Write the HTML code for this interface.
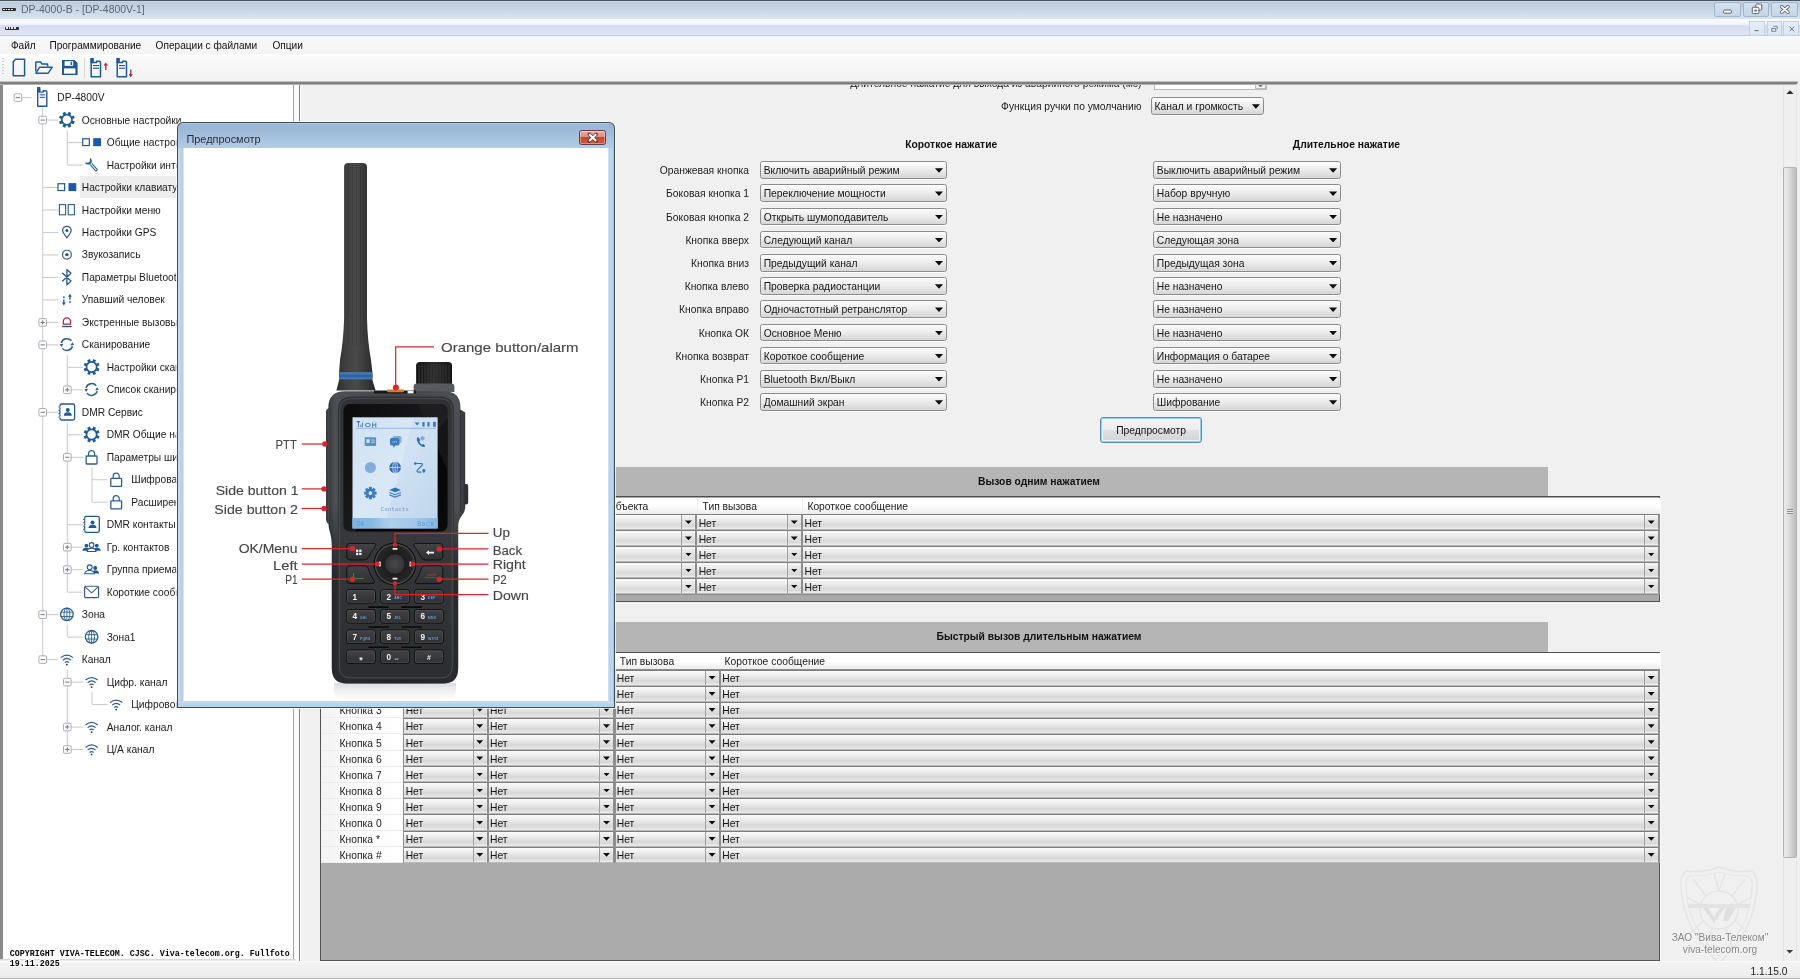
<!DOCTYPE html><html lang="ru"><head><meta charset="utf-8"><title>DP-4000-B</title><style>

*{box-sizing:border-box;margin:0;padding:0}
html,body{width:1800px;height:979px;overflow:hidden;background:#f0f0f0}
#root{position:absolute;left:0;top:0;width:1800px;height:979px;overflow:hidden;will-change:transform;background:#f0f0f0}
body{font-family:"Liberation Sans",sans-serif;font-size:10.3px;color:#1c1c1c;position:relative}
.a{position:absolute}
.t{position:absolute;white-space:nowrap;line-height:12px;height:12px}
.b{font-weight:700}
#titlebar{left:0;top:0;width:1800px;height:19px;background:linear-gradient(#d3dde8 0,#bdccdc 1.2px,#c4d2e1 35%,#d9e4ef 100%);border-top:1px solid #4b5563}
#mdibar{left:0;top:19px;width:1800px;height:17px;background:linear-gradient(#fbfcff 0,#f4f6fc 28%,#eceef9 35%,#d7dbef 42%,#dbdff3 75%,#e2e5f6 100%);border-bottom:1px solid #c5c9d6}
#menubar{left:0;top:36px;width:1800px;height:18px;background:linear-gradient(#f8f8f8,#f4f4f4)}
#toolbar{left:0;top:54px;width:1800px;height:27px;background:linear-gradient(#fefefe 0,#f8f8f8 25%,#f3f3f3 100%)}
#tbshadow{left:0;top:81px;width:1798px;height:4.4px;background:linear-gradient(#f1f1f1 0,#9a9a9a 22%,#767676 48%,#7c7c7c 68%,#b5b5b5 88%,#efefef 100%);border-radius:0 0 4px 0}
.wbtn{position:absolute;top:2px;height:14.5px;background:linear-gradient(#d3e0ee,#c5d6e8);border:1px solid #a3b6cb;border-radius:2px}
.mbtn{position:absolute;top:20.5px;height:15px;background:linear-gradient(#e6eff9,#d8e6f4);border:1px solid #c2d1e2}
#status{left:0;top:961px;width:1800px;height:18px;background:linear-gradient(#f4f4f4,#ececec);border-top:1px solid #fafafa;border-bottom:1.5px solid #b4b4b4}


.cb{position:absolute;height:17.6px;border:1px solid #8c8c8c;border-radius:2.5px;background:linear-gradient(#fcfcfc 0,#ededed 45%,#d6d6d6 100%);box-shadow:0 1px 0 #fdfdfd}
.cb .t{left:2.6px;top:3.05px;color:#161616}
.ar{position:absolute;width:8.2px;height:4.5px;background:#0e0e0e;clip-path:polygon(0 0,100% 0,50% 100%)}
.gc{position:absolute;height:16.1px;border:1px solid #8f8f8f;border-top-color:#7c7c7c;border-bottom-color:#b9b9b9;background:linear-gradient(#ffffff 0,#f7f7f7 8%,#ececec 35%,#d9d9d9 68%,#dcdcdc 80%,#ebebeb 100%)}
.gc i{position:absolute;right:0;top:0;bottom:0;width:14.2px;border-left:1px solid #a0a0a0;background:linear-gradient(#f6f6f6 0,#e4e4e4 40%,#d8d8d8 82%,#f2f2f2 100%)}
.gc .ar{right:3.5px;top:5.4px;width:6.9px;height:3.7px}
.gc .t{left:1.3px;top:2.6px;color:#161616}
.band{position:absolute;background:#b5b5b5}

</style></head><body><div id="root">
<div class="a" style="left:300.4px;top:85px;width:1497px;height:876px;background:#f0f0f0"></div>
<div class="a" style="left:300px;top:71.2px;width:1481px;height:30px;overflow:hidden;clip-path:inset(13.4px 0 0 0)"><div class="t" style="right:639.6px;top:6.6px;color:#1c1c1c">Длительное нажатие для выхода из аварийного режима (мс)</div><div class="a" style="left:853.5px;top:1px;width:113.5px;height:17.6px;border:1px solid #b8b8b8;background:#fff"></div><div class="a" style="left:955px;top:10.4px;width:11px;height:7.4px;border:1px solid #bdbdbd;background:#f0f0f0"></div><div class="ar" style="left:957.8px;top:13.2px;background:#777;width:5.4px;height:3px"></div></div>
<div class="t" style="right:658.5999999999999px;top:100.5px">Функция ручки по умолчанию</div>
<div class="cb" style="left:1151px;top:97.2px;width:112.6px"><div class="t">Канал и громкость</div><div class="ar" style="right:2.6px;top:6.1px"></div></div>
<div class="t b" style="left:905.2px;top:138.9px;color:#111">Короткое нажатие</div>
<div class="t b" style="left:1292.8px;top:138.9px;color:#111">Длительное нажатие</div>
<div class="t" style="right:1051px;top:165.1px">Оранжевая кнопка</div>
<div class="cb" style="left:760.1px;top:161.2px;width:186.6px"><div class="t">Включить аварийный режим</div><div class="ar" style="right:2.6px;top:6.1px"></div></div>
<div class="cb" style="left:1153.2px;top:161.2px;width:187.6px"><div class="t">Выключить аварийный режим</div><div class="ar" style="right:2.6px;top:6.1px"></div></div>
<div class="t" style="right:1051px;top:188.3px">Боковая кнопка 1</div>
<div class="cb" style="left:760.1px;top:184.4px;width:186.6px"><div class="t">Переключение мощности</div><div class="ar" style="right:2.6px;top:6.1px"></div></div>
<div class="cb" style="left:1153.2px;top:184.4px;width:187.6px"><div class="t">Набор вручную</div><div class="ar" style="right:2.6px;top:6.1px"></div></div>
<div class="t" style="right:1051px;top:211.5px">Боковая кнопка 2</div>
<div class="cb" style="left:760.1px;top:207.6px;width:186.6px"><div class="t">Открыть шумоподавитель</div><div class="ar" style="right:2.6px;top:6.1px"></div></div>
<div class="cb" style="left:1153.2px;top:207.6px;width:187.6px"><div class="t">Не назначено</div><div class="ar" style="right:2.6px;top:6.1px"></div></div>
<div class="t" style="right:1051px;top:234.7px">Кнопка вверх</div>
<div class="cb" style="left:760.1px;top:230.8px;width:186.6px"><div class="t">Следующий канал</div><div class="ar" style="right:2.6px;top:6.1px"></div></div>
<div class="cb" style="left:1153.2px;top:230.8px;width:187.6px"><div class="t">Следующая зона</div><div class="ar" style="right:2.6px;top:6.1px"></div></div>
<div class="t" style="right:1051px;top:257.9px">Кнопка вниз</div>
<div class="cb" style="left:760.1px;top:254.0px;width:186.6px"><div class="t">Предыдущий канал</div><div class="ar" style="right:2.6px;top:6.1px"></div></div>
<div class="cb" style="left:1153.2px;top:254.0px;width:187.6px"><div class="t">Предыдущая зона</div><div class="ar" style="right:2.6px;top:6.1px"></div></div>
<div class="t" style="right:1051px;top:281.1px">Кнопка влево</div>
<div class="cb" style="left:760.1px;top:277.2px;width:186.6px"><div class="t">Проверка радиостанции</div><div class="ar" style="right:2.6px;top:6.1px"></div></div>
<div class="cb" style="left:1153.2px;top:277.2px;width:187.6px"><div class="t">Не назначено</div><div class="ar" style="right:2.6px;top:6.1px"></div></div>
<div class="t" style="right:1051px;top:304.3px">Кнопка вправо</div>
<div class="cb" style="left:760.1px;top:300.4px;width:186.6px"><div class="t">Одночастотный ретранслятор</div><div class="ar" style="right:2.6px;top:6.1px"></div></div>
<div class="cb" style="left:1153.2px;top:300.4px;width:187.6px"><div class="t">Не назначено</div><div class="ar" style="right:2.6px;top:6.1px"></div></div>
<div class="t" style="right:1051px;top:327.5px">Кнопка ОК</div>
<div class="cb" style="left:760.1px;top:323.6px;width:186.6px"><div class="t">Основное Меню</div><div class="ar" style="right:2.6px;top:6.1px"></div></div>
<div class="cb" style="left:1153.2px;top:323.6px;width:187.6px"><div class="t">Не назначено</div><div class="ar" style="right:2.6px;top:6.1px"></div></div>
<div class="t" style="right:1051px;top:350.7px">Кнопка возврат</div>
<div class="cb" style="left:760.1px;top:346.8px;width:186.6px"><div class="t">Короткое сообщение</div><div class="ar" style="right:2.6px;top:6.1px"></div></div>
<div class="cb" style="left:1153.2px;top:346.8px;width:187.6px"><div class="t">Информация о батарее</div><div class="ar" style="right:2.6px;top:6.1px"></div></div>
<div class="t" style="right:1051px;top:373.9px">Кнопка P1</div>
<div class="cb" style="left:760.1px;top:370.0px;width:186.6px"><div class="t">Bluetooth Вкл/Выкл</div><div class="ar" style="right:2.6px;top:6.1px"></div></div>
<div class="cb" style="left:1153.2px;top:370.0px;width:187.6px"><div class="t">Не назначено</div><div class="ar" style="right:2.6px;top:6.1px"></div></div>
<div class="t" style="right:1051px;top:397.1px">Кнопка P2</div>
<div class="cb" style="left:760.1px;top:393.2px;width:186.6px"><div class="t">Домашний экран</div><div class="ar" style="right:2.6px;top:6.1px"></div></div>
<div class="cb" style="left:1153.2px;top:393.2px;width:187.6px"><div class="t">Шифрование</div><div class="ar" style="right:2.6px;top:6.1px"></div></div>
<div class="a" style="left:1100px;top:417px;width:102.4px;height:26px;border:1px solid #4f93c4;border-radius:3px;background:linear-gradient(#f5f5f5 0,#ededed 48%,#dfdfdf 52%,#d4d4d4 100%);box-shadow:inset 0 0 0 1px #8fd0f2, inset 0 0 0 2px #eaf5fb"></div>
<div class="t" style="left:1100px;width:102.2px;text-align:center;top:424.5px;color:#111">Предпросмотр</div>
<div class="band" style="left:320px;top:467.2px;width:1227.8px;height:29.6px"></div>
<div class="t b" style="left:839px;width:400px;text-align:center;top:476.3px;color:#111">Вызов одним нажатием</div>
<div class="a" style="left:319.6px;top:496.3px;width:1340.5px;height:105.6px;background:#a9a9a9;border:1px solid #545454;border-top:1.4px solid #4c4c4c;box-shadow:1px 0 0 #fafafa"></div>
<div class="a" style="left:320.8px;top:497.6px;width:1338.8px;height:16.4px;background:linear-gradient(#ffffff 0,#fdfdfd 55%,#ececec 100%)"></div>
<div class="t" style="left:596.8px;top:501.2px;color:#1a1a1a">ID объекта</div>
<div class="t" style="left:702.6px;top:501.2px;color:#1a1a1a">Тип вызова</div>
<div class="t" style="left:807.4px;top:501.2px;color:#1a1a1a">Короткое сообщение</div>
<div class="a" style="left:696.6px;top:498px;width:1px;height:15.6px;background:#ececec"></div>
<div class="a" style="left:802px;top:498px;width:1px;height:15.6px;background:#ececec"></div>
<div class="a" style="left:320.8px;top:513.8px;width:1338.8px;height:81px;background:#8d8d8d"></div>
<div class="gc" style="left:560px;top:514.0px;width:136.4px"><div class="t">Нет</div><i></i><div class="ar"></div></div>
<div class="gc" style="left:696.4px;top:514.0px;width:105.8px"><div class="t">Нет</div><i></i><div class="ar"></div></div>
<div class="gc" style="left:802.2px;top:514.0px;width:857px"><div class="t">Нет</div><i></i><div class="ar"></div></div>
<div class="gc" style="left:560px;top:530.06px;width:136.4px"><div class="t">Нет</div><i></i><div class="ar"></div></div>
<div class="gc" style="left:696.4px;top:530.06px;width:105.8px"><div class="t">Нет</div><i></i><div class="ar"></div></div>
<div class="gc" style="left:802.2px;top:530.06px;width:857px"><div class="t">Нет</div><i></i><div class="ar"></div></div>
<div class="gc" style="left:560px;top:546.12px;width:136.4px"><div class="t">Нет</div><i></i><div class="ar"></div></div>
<div class="gc" style="left:696.4px;top:546.12px;width:105.8px"><div class="t">Нет</div><i></i><div class="ar"></div></div>
<div class="gc" style="left:802.2px;top:546.12px;width:857px"><div class="t">Нет</div><i></i><div class="ar"></div></div>
<div class="gc" style="left:560px;top:562.18px;width:136.4px"><div class="t">Нет</div><i></i><div class="ar"></div></div>
<div class="gc" style="left:696.4px;top:562.18px;width:105.8px"><div class="t">Нет</div><i></i><div class="ar"></div></div>
<div class="gc" style="left:802.2px;top:562.18px;width:857px"><div class="t">Нет</div><i></i><div class="ar"></div></div>
<div class="gc" style="left:560px;top:578.24px;width:136.4px"><div class="t">Нет</div><i></i><div class="ar"></div></div>
<div class="gc" style="left:696.4px;top:578.24px;width:105.8px"><div class="t">Нет</div><i></i><div class="ar"></div></div>
<div class="gc" style="left:802.2px;top:578.24px;width:857px"><div class="t">Нет</div><i></i><div class="ar"></div></div>
<div class="band" style="left:320px;top:622.2px;width:1227.8px;height:29.4px"></div>
<div class="t b" style="left:839px;width:400px;text-align:center;top:631px;color:#111">Быстрый вызов длительным нажатием</div>
<div class="a" style="left:319.6px;top:651.6px;width:1340.5px;height:309.8px;background:#ababab;border:1px solid #545454;border-top:1.4px solid #4c4c4c;box-shadow:1px 0 0 #fafafa"></div>
<div class="a" style="left:320.8px;top:653px;width:1338.8px;height:16.4px;background:linear-gradient(#ffffff 0,#fdfdfd 55%,#ececec 100%)"></div>
<div class="t" style="left:408px;top:655.8px;color:#1a1a1a">Функция</div>
<div class="t" style="left:492px;top:655.8px;color:#1a1a1a">Объект</div>
<div class="t" style="left:619.8px;top:655.8px;color:#1a1a1a">Тип вызова</div>
<div class="t" style="left:724.6px;top:655.8px;color:#1a1a1a">Короткое сообщение</div>
<div class="a" style="left:320.8px;top:669.4px;width:82.6px;height:193.6px;background:linear-gradient(90deg,#f3f3f3 0,#fbfbfb 40%,#ffffff 100%)"></div>
<div class="a" style="left:403.4px;top:669.2px;width:1256.2px;height:194px;background:#8d8d8d"></div>
<div class="a" style="left:320.8px;top:685.1px;width:82.6px;height:1px;background:#ececec"></div>
<div class="t" style="left:339.6px;top:673.1px;color:#1a1a1a">Кнопка 1</div>
<div class="gc" style="left:403.4px;top:669.5px;width:84.3px"><div class="t">Нет</div><i></i><div class="ar"></div></div>
<div class="gc" style="left:487.7px;top:669.5px;width:126.8px"><div class="t">Нет</div><i></i><div class="ar"></div></div>
<div class="gc" style="left:614.5px;top:669.5px;width:105.5px"><div class="t">Нет</div><i></i><div class="ar"></div></div>
<div class="gc" style="left:720px;top:669.5px;width:939.2px"><div class="t">Нет</div><i></i><div class="ar"></div></div>
<div class="a" style="left:320.8px;top:701.21px;width:82.6px;height:1px;background:#ececec"></div>
<div class="t" style="left:339.6px;top:689.21px;color:#1a1a1a">Кнопка 2</div>
<div class="gc" style="left:403.4px;top:685.61px;width:84.3px"><div class="t">Нет</div><i></i><div class="ar"></div></div>
<div class="gc" style="left:487.7px;top:685.61px;width:126.8px"><div class="t">Нет</div><i></i><div class="ar"></div></div>
<div class="gc" style="left:614.5px;top:685.61px;width:105.5px"><div class="t">Нет</div><i></i><div class="ar"></div></div>
<div class="gc" style="left:720px;top:685.61px;width:939.2px"><div class="t">Нет</div><i></i><div class="ar"></div></div>
<div class="a" style="left:320.8px;top:717.32px;width:82.6px;height:1px;background:#ececec"></div>
<div class="t" style="left:339.6px;top:705.32px;color:#1a1a1a">Кнопка 3</div>
<div class="gc" style="left:403.4px;top:701.72px;width:84.3px"><div class="t">Нет</div><i></i><div class="ar"></div></div>
<div class="gc" style="left:487.7px;top:701.72px;width:126.8px"><div class="t">Нет</div><i></i><div class="ar"></div></div>
<div class="gc" style="left:614.5px;top:701.72px;width:105.5px"><div class="t">Нет</div><i></i><div class="ar"></div></div>
<div class="gc" style="left:720px;top:701.72px;width:939.2px"><div class="t">Нет</div><i></i><div class="ar"></div></div>
<div class="a" style="left:320.8px;top:733.43px;width:82.6px;height:1px;background:#ececec"></div>
<div class="t" style="left:339.6px;top:721.43px;color:#1a1a1a">Кнопка 4</div>
<div class="gc" style="left:403.4px;top:717.83px;width:84.3px"><div class="t">Нет</div><i></i><div class="ar"></div></div>
<div class="gc" style="left:487.7px;top:717.83px;width:126.8px"><div class="t">Нет</div><i></i><div class="ar"></div></div>
<div class="gc" style="left:614.5px;top:717.83px;width:105.5px"><div class="t">Нет</div><i></i><div class="ar"></div></div>
<div class="gc" style="left:720px;top:717.83px;width:939.2px"><div class="t">Нет</div><i></i><div class="ar"></div></div>
<div class="a" style="left:320.8px;top:749.54px;width:82.6px;height:1px;background:#ececec"></div>
<div class="t" style="left:339.6px;top:737.54px;color:#1a1a1a">Кнопка 5</div>
<div class="gc" style="left:403.4px;top:733.94px;width:84.3px"><div class="t">Нет</div><i></i><div class="ar"></div></div>
<div class="gc" style="left:487.7px;top:733.94px;width:126.8px"><div class="t">Нет</div><i></i><div class="ar"></div></div>
<div class="gc" style="left:614.5px;top:733.94px;width:105.5px"><div class="t">Нет</div><i></i><div class="ar"></div></div>
<div class="gc" style="left:720px;top:733.94px;width:939.2px"><div class="t">Нет</div><i></i><div class="ar"></div></div>
<div class="a" style="left:320.8px;top:765.65px;width:82.6px;height:1px;background:#ececec"></div>
<div class="t" style="left:339.6px;top:753.65px;color:#1a1a1a">Кнопка 6</div>
<div class="gc" style="left:403.4px;top:750.05px;width:84.3px"><div class="t">Нет</div><i></i><div class="ar"></div></div>
<div class="gc" style="left:487.7px;top:750.05px;width:126.8px"><div class="t">Нет</div><i></i><div class="ar"></div></div>
<div class="gc" style="left:614.5px;top:750.05px;width:105.5px"><div class="t">Нет</div><i></i><div class="ar"></div></div>
<div class="gc" style="left:720px;top:750.05px;width:939.2px"><div class="t">Нет</div><i></i><div class="ar"></div></div>
<div class="a" style="left:320.8px;top:781.76px;width:82.6px;height:1px;background:#ececec"></div>
<div class="t" style="left:339.6px;top:769.76px;color:#1a1a1a">Кнопка 7</div>
<div class="gc" style="left:403.4px;top:766.16px;width:84.3px"><div class="t">Нет</div><i></i><div class="ar"></div></div>
<div class="gc" style="left:487.7px;top:766.16px;width:126.8px"><div class="t">Нет</div><i></i><div class="ar"></div></div>
<div class="gc" style="left:614.5px;top:766.16px;width:105.5px"><div class="t">Нет</div><i></i><div class="ar"></div></div>
<div class="gc" style="left:720px;top:766.16px;width:939.2px"><div class="t">Нет</div><i></i><div class="ar"></div></div>
<div class="a" style="left:320.8px;top:797.87px;width:82.6px;height:1px;background:#ececec"></div>
<div class="t" style="left:339.6px;top:785.87px;color:#1a1a1a">Кнопка 8</div>
<div class="gc" style="left:403.4px;top:782.27px;width:84.3px"><div class="t">Нет</div><i></i><div class="ar"></div></div>
<div class="gc" style="left:487.7px;top:782.27px;width:126.8px"><div class="t">Нет</div><i></i><div class="ar"></div></div>
<div class="gc" style="left:614.5px;top:782.27px;width:105.5px"><div class="t">Нет</div><i></i><div class="ar"></div></div>
<div class="gc" style="left:720px;top:782.27px;width:939.2px"><div class="t">Нет</div><i></i><div class="ar"></div></div>
<div class="a" style="left:320.8px;top:813.98px;width:82.6px;height:1px;background:#ececec"></div>
<div class="t" style="left:339.6px;top:801.98px;color:#1a1a1a">Кнопка 9</div>
<div class="gc" style="left:403.4px;top:798.38px;width:84.3px"><div class="t">Нет</div><i></i><div class="ar"></div></div>
<div class="gc" style="left:487.7px;top:798.38px;width:126.8px"><div class="t">Нет</div><i></i><div class="ar"></div></div>
<div class="gc" style="left:614.5px;top:798.38px;width:105.5px"><div class="t">Нет</div><i></i><div class="ar"></div></div>
<div class="gc" style="left:720px;top:798.38px;width:939.2px"><div class="t">Нет</div><i></i><div class="ar"></div></div>
<div class="a" style="left:320.8px;top:830.09px;width:82.6px;height:1px;background:#ececec"></div>
<div class="t" style="left:339.6px;top:818.09px;color:#1a1a1a">Кнопка 0</div>
<div class="gc" style="left:403.4px;top:814.49px;width:84.3px"><div class="t">Нет</div><i></i><div class="ar"></div></div>
<div class="gc" style="left:487.7px;top:814.49px;width:126.8px"><div class="t">Нет</div><i></i><div class="ar"></div></div>
<div class="gc" style="left:614.5px;top:814.49px;width:105.5px"><div class="t">Нет</div><i></i><div class="ar"></div></div>
<div class="gc" style="left:720px;top:814.49px;width:939.2px"><div class="t">Нет</div><i></i><div class="ar"></div></div>
<div class="a" style="left:320.8px;top:846.2px;width:82.6px;height:1px;background:#ececec"></div>
<div class="t" style="left:339.6px;top:834.2px;color:#1a1a1a">Кнопка *</div>
<div class="gc" style="left:403.4px;top:830.6px;width:84.3px"><div class="t">Нет</div><i></i><div class="ar"></div></div>
<div class="gc" style="left:487.7px;top:830.6px;width:126.8px"><div class="t">Нет</div><i></i><div class="ar"></div></div>
<div class="gc" style="left:614.5px;top:830.6px;width:105.5px"><div class="t">Нет</div><i></i><div class="ar"></div></div>
<div class="gc" style="left:720px;top:830.6px;width:939.2px"><div class="t">Нет</div><i></i><div class="ar"></div></div>
<div class="a" style="left:320.8px;top:862.31px;width:82.6px;height:1px;background:#ececec"></div>
<div class="t" style="left:339.6px;top:850.31px;color:#1a1a1a">Кнопка #</div>
<div class="gc" style="left:403.4px;top:846.71px;width:84.3px"><div class="t">Нет</div><i></i><div class="ar"></div></div>
<div class="gc" style="left:487.7px;top:846.71px;width:126.8px"><div class="t">Нет</div><i></i><div class="ar"></div></div>
<div class="gc" style="left:614.5px;top:846.71px;width:105.5px"><div class="t">Нет</div><i></i><div class="ar"></div></div>
<div class="gc" style="left:720px;top:846.71px;width:939.2px"><div class="t">Нет</div><i></i><div class="ar"></div></div>
<div class="a" style="left:1783.2px;top:85px;width:13.8px;height:876px;background:#efefef;border-left:1px solid #e3e3e3;border-right:1px solid #e6e6e6"></div>
<div class="a" style="left:1783.4px;top:166.6px;width:13.4px;height:691.2px;border:1px solid #b3b3b3;border-radius:1.5px;background:linear-gradient(90deg,#ececec 0,#dedede 40%,#c3c3c3 85%,#bdbdbd 100%)"></div>
<div class="a" style="left:1786.6px;top:508.6px;width:6.4px;height:5.4px;background:repeating-linear-gradient(#8f8f8f 0 0.9px,#e8e8e8 0.9px 2.1px)"></div>
<div class="ar" style="left:1786.4px;top:90.2px;width:7.2px;height:3.8px;background:#2c2c2c;clip-path:polygon(50% 0,100% 100%,0 100%)"></div>
<div class="ar" style="left:1786.4px;top:950px;width:6.8px;height:3.6px;background:#3c3c3c"></div>
<svg class="a" style="left:1676px;top:863px" width="86" height="104" viewBox="0 0 86 104"><g fill="none" stroke="#e5e5e5" stroke-width="1.5"><path d="M43 4 Q28 10 10 8 Q4 14 5 22 Q6 66 43 100 Q80 66 81 22 Q82 14 76 8 Q58 10 43 4 Z"/><path d="M43 9 Q29 14 13 13 Q9 17 10 24 Q11 63 43 93 Q75 63 76 24 Q77 17 73 13 Q57 14 43 9 Z" stroke-width="1"/><circle cx="43" cy="47" r="19"/><path d="M43 28 L38 11 M43 28 L49 11 M30 33 L17 16 M56 33 L69 16 M25 42 L10 34 M61 42 L76 34 M27 58 L14 70 M59 58 L72 70 M36 65 L30 84 M50 65 L56 84"/></g><path d="M12 41 H74 V45 H12 Z" fill="#e3e3e3"/><path d="M27 45 L38 60 L49 45 H44 L38 54 L32 45 Z M50 45 H60 L52 58 H47 Z" fill="#e0e0e0"/></svg>
<div class="t" style="left:1620px;width:200px;text-align:center;top:932.1px;font-size:10.1px;color:#868686;text-shadow:0.6px 0.6px 0 #fbfbfb">ЗАО "Вива-Телеком"</div>
<div class="t" style="left:1620px;width:200px;text-align:center;top:944.2px;font-size:10.15px;color:#868686;text-shadow:0.6px 0.6px 0 #fbfbfb">viva-telecom.org</div>
<div class="a" style="left:0;top:84.5px;width:296px;height:876.5px;background:#8a8a8a"></div>
<div class="a" style="left:3.2px;top:85.3px;width:290.3px;height:874px;background:#fff"></div>
<div class="a" style="left:293px;top:84.6px;width:8.6px;height:876.4px;background:linear-gradient(90deg,#a4a4a4 0,#a4a4a4 1.2px,#fbfbfb 1.5px,#fbfbfb 5.8px,#7e7e7e 6.1px,#7e7e7e 7.2px,#fcfcfc 7.5px,#fcfcfc 8.3px,#f0f0f0 8.6px)"></div>
<div class="a" style="left:0;top:959.4px;width:296px;height:1.6px;background:linear-gradient(#d0d0d0,#f4f4f4)"></div>
<div class="a" style="left:80.2px;top:176.32px;width:100px;height:21.6px;background:#ededed"></div>
<svg class="a" style="left:0;top:0" width="296" height="979" viewBox="0 0 296 979"><path d="M42.7 107.8 V659.3" stroke="#c9c9c9" stroke-width="1"/><path d="M67.3 130.28 V164.74" stroke="#c9c9c9" stroke-width="1"/><path d="M67.3 355.08 V389.54" stroke="#c9c9c9" stroke-width="1"/><path d="M67.3 422.52000000000004 V591.86" stroke="#c9c9c9" stroke-width="1"/><path d="M92.0 467.48 V501.94" stroke="#c9c9c9" stroke-width="1"/><path d="M67.3 624.8399999999999 V636.8199999999999" stroke="#c9c9c9" stroke-width="1"/><path d="M67.3 669.8 V749.2199999999999" stroke="#c9c9c9" stroke-width="1"/><path d="M92.0 692.28 V704.26" stroke="#c9c9c9" stroke-width="1"/><path d="M21.9 97.6 H31.700000000000003" stroke="#c9c9c9" stroke-width="1"/><rect x="14.099999999999998" y="93.8" width="7.6" height="7.6" rx="1.2" fill="#fdfdfd" stroke="#a9adb6" stroke-width="1"/><path d="M15.799999999999999 97.6 h4.2" stroke="#6f7480" stroke-width="1"/><g transform="translate(42.2,97.3)"><g transform="translate(-5.4,-10)"><path d="M0.9 0.4 V19 H10 V4.4 Q10 3.4 9 3.4 H6.4 V4.8 H3 V0.4 Z" fill="#fff" stroke="#1f5a96" stroke-width="1.4" stroke-linejoin="round"/><rect x="0.2" y="0" width="2.9" height="5.2" fill="#1f5a96"/><rect x="2.9" y="7" width="5.4" height="1.1" fill="#1f5a96"/><rect x="2.9" y="9.5" width="5.4" height="1.2" fill="#46698f"/></g></g><path d="M42.7 120.08 H58.400000000000006" stroke="#c9c9c9" stroke-width="1"/><rect x="38.900000000000006" y="116.28" width="7.6" height="7.6" rx="1.2" fill="#fdfdfd" stroke="#a9adb6" stroke-width="1"/><path d="M40.6 120.08 h4.2" stroke="#6f7480" stroke-width="1"/><g transform="translate(66.9,119.78)"><circle r="5.1" fill="none" stroke="#1f5a96" stroke-width="1.7"/><rect x="-1.45" y="-8" width="2.9" height="2.7" fill="#1f5a96" transform="rotate(22.5)"/><rect x="-1.45" y="-8" width="2.9" height="2.7" fill="#1f5a96" transform="rotate(67.5)"/><rect x="-1.45" y="-8" width="2.9" height="2.7" fill="#1f5a96" transform="rotate(112.5)"/><rect x="-1.45" y="-8" width="2.9" height="2.7" fill="#1f5a96" transform="rotate(157.5)"/><rect x="-1.45" y="-8" width="2.9" height="2.7" fill="#1f5a96" transform="rotate(202.5)"/><rect x="-1.45" y="-8" width="2.9" height="2.7" fill="#1f5a96" transform="rotate(247.5)"/><rect x="-1.45" y="-8" width="2.9" height="2.7" fill="#1f5a96" transform="rotate(292.5)"/><rect x="-1.45" y="-8" width="2.9" height="2.7" fill="#1f5a96" transform="rotate(337.5)"/></g><path d="M67.3 142.56 H83.1" stroke="#c9c9c9" stroke-width="1"/><g transform="translate(91.6,142.26)"><rect x="-8.9" y="-3.5" width="6.6" height="6.8" fill="#fff" stroke="#1f5a96" stroke-width="1.2"/><rect x="1.6" y="-4.1" width="7.8" height="8" fill="#1a59a8"/></g><path d="M67.3 165.04000000000002 H83.1" stroke="#c9c9c9" stroke-width="1"/><g transform="translate(91.6,164.74)"><g transform="rotate(-42)"><path d="M-1.05 -1 V7.2 Q0 8.3 1.05 7.2 V-1" fill="#fff" stroke="#2d5d8f" stroke-width="1.1"/><path d="M-3.4 -6.2 A3.6 3.6 0 1 0 3.4 -6.2 L1.2 -3.6 H-1.2 Z" fill="#1f5a96"/></g></g><path d="M42.7 187.52 H58.400000000000006" stroke="#c9c9c9" stroke-width="1"/><g transform="translate(66.9,187.22)"><rect x="-8.9" y="-3.5" width="6.6" height="6.8" fill="#fff" stroke="#1f5a96" stroke-width="1.2"/><rect x="1.6" y="-4.1" width="7.8" height="8" fill="#1a59a8"/></g><path d="M42.7 210.0 H58.400000000000006" stroke="#c9c9c9" stroke-width="1"/><g transform="translate(66.9,209.7)"><rect x="-7.5" y="-5.1" width="6.2" height="10.2" fill="none" stroke="#2d5d8f" stroke-width="1.1"/><rect x="1.3" y="-5.1" width="6.2" height="10.2" fill="none" stroke="#2d5d8f" stroke-width="1.1"/></g><path d="M42.7 232.48000000000002 H58.400000000000006" stroke="#c9c9c9" stroke-width="1"/><g transform="translate(66.9,232.18)"><path d="M0 5.6 C-2.2 2.6 -4.3 0.6 -4.3 -1.6 A4.3 4.3 0 0 1 4.3 -1.6 C4.3 0.6 2.2 2.6 0 5.6 Z" fill="#fff" stroke="#2d5d8f" stroke-width="1.2"/><circle cy="-1.6" r="1.5" fill="#1f5a96"/></g><path d="M42.7 254.96000000000004 H58.400000000000006" stroke="#c9c9c9" stroke-width="1"/><g transform="translate(66.9,254.66000000000003)"><circle r="4.4" fill="none" stroke="#2d5d8f" stroke-width="1.2"/><circle r="1.7" fill="#1f5a96"/></g><path d="M42.7 277.44 H58.400000000000006" stroke="#c9c9c9" stroke-width="1"/><g transform="translate(66.9,277.14)"><path d="M-4.3 -3.9 L4.1 3.9 L0 7.6 V-7.6 L4.1 -3.9 L-4.3 3.9" fill="none" stroke="#1f5a96" stroke-width="1.3" stroke-linejoin="round" stroke-linecap="round"/></g><path d="M42.7 299.92 H58.400000000000006" stroke="#c9c9c9" stroke-width="1"/><g transform="translate(66.9,299.62)"><rect x="-3.8" y="-3.2" width="1.5" height="1.7" fill="#1f5a96"/><path d="M-3.05 0 V4.2" stroke="#1f5a96" stroke-width="1.3"/><path d="M-5 3 L-3.05 6 L-1.1 3 Z" fill="#1f5a96"/><rect x="2.3" y="1.6" width="1.5" height="1.7" fill="#1f5a96"/><path d="M3.05 0.2 V-4" stroke="#1f5a96" stroke-width="1.3"/><path d="M1.1 -2.8 L3.05 -5.8 L5 -2.8 Z" fill="#1f5a96"/></g><path d="M42.7 322.40000000000003 H58.400000000000006" stroke="#c9c9c9" stroke-width="1"/><rect x="38.900000000000006" y="318.6" width="7.6" height="7.6" rx="1.2" fill="#fdfdfd" stroke="#a9adb6" stroke-width="1"/><path d="M40.6 322.40000000000003 h4.2" stroke="#6f7480" stroke-width="1"/><path d="M42.7 320.3 v4.2" stroke="#6f7480" stroke-width="1"/><g transform="translate(66.9,322.1)"><path d="M-3.6 2.1 V-0.6 A3.6 3.6 0 0 1 3.6 -0.6 V2.1 Z" fill="#fff" stroke="#a3293a" stroke-width="1.2" stroke-linejoin="round"/><path d="M-4.9 4.4 H4.9" stroke="#1f5a96" stroke-width="1.4"/></g><path d="M42.7 344.88 H58.400000000000006" stroke="#c9c9c9" stroke-width="1"/><rect x="38.900000000000006" y="341.08" width="7.6" height="7.6" rx="1.2" fill="#fdfdfd" stroke="#a9adb6" stroke-width="1"/><path d="M40.6 344.88 h4.2" stroke="#6f7480" stroke-width="1"/><g transform="translate(66.9,344.58)"><path d="M-5.6 -1.6 A5.9 5.9 0 0 1 4.6 -3.8" fill="none" stroke="#2d5d8f" stroke-width="1.5"/><path d="M5.6 1.6 A5.9 5.9 0 0 1 -4.6 3.8" fill="none" stroke="#2d5d8f" stroke-width="1.5"/><path d="M-7.3 -0.3 L-5.4 2.4 L-3.5 -0.9 Z" fill="#2d5d8f"/><path d="M7.3 0.3 L5.4 -2.4 L3.5 0.9 Z" fill="#2d5d8f"/></g><path d="M67.3 367.36 H83.1" stroke="#c9c9c9" stroke-width="1"/><g transform="translate(91.6,367.06)"><circle r="5.1" fill="none" stroke="#1f5a96" stroke-width="1.7"/><rect x="-1.45" y="-8" width="2.9" height="2.7" fill="#1f5a96" transform="rotate(22.5)"/><rect x="-1.45" y="-8" width="2.9" height="2.7" fill="#1f5a96" transform="rotate(67.5)"/><rect x="-1.45" y="-8" width="2.9" height="2.7" fill="#1f5a96" transform="rotate(112.5)"/><rect x="-1.45" y="-8" width="2.9" height="2.7" fill="#1f5a96" transform="rotate(157.5)"/><rect x="-1.45" y="-8" width="2.9" height="2.7" fill="#1f5a96" transform="rotate(202.5)"/><rect x="-1.45" y="-8" width="2.9" height="2.7" fill="#1f5a96" transform="rotate(247.5)"/><rect x="-1.45" y="-8" width="2.9" height="2.7" fill="#1f5a96" transform="rotate(292.5)"/><rect x="-1.45" y="-8" width="2.9" height="2.7" fill="#1f5a96" transform="rotate(337.5)"/></g><path d="M67.3 389.84000000000003 H83.1" stroke="#c9c9c9" stroke-width="1"/><rect x="63.5" y="386.04" width="7.6" height="7.6" rx="1.2" fill="#fdfdfd" stroke="#a9adb6" stroke-width="1"/><path d="M65.2 389.84000000000003 h4.2" stroke="#6f7480" stroke-width="1"/><path d="M67.3 387.74 v4.2" stroke="#6f7480" stroke-width="1"/><g transform="translate(91.6,389.54)"><path d="M-5.6 -1.6 A5.9 5.9 0 0 1 4.6 -3.8" fill="none" stroke="#2d5d8f" stroke-width="1.5"/><path d="M5.6 1.6 A5.9 5.9 0 0 1 -4.6 3.8" fill="none" stroke="#2d5d8f" stroke-width="1.5"/><path d="M-7.3 -0.3 L-5.4 2.4 L-3.5 -0.9 Z" fill="#2d5d8f"/><path d="M7.3 0.3 L5.4 -2.4 L3.5 0.9 Z" fill="#2d5d8f"/></g><path d="M42.7 412.32000000000005 H58.400000000000006" stroke="#c9c9c9" stroke-width="1"/><rect x="38.900000000000006" y="408.52000000000004" width="7.6" height="7.6" rx="1.2" fill="#fdfdfd" stroke="#a9adb6" stroke-width="1"/><path d="M40.6 412.32000000000005 h4.2" stroke="#6f7480" stroke-width="1"/><g transform="translate(66.9,412.02000000000004)"><rect x="-6.9" y="-8" width="14.6" height="16" rx="1.7" fill="#fff" stroke="#1f5a96" stroke-width="1.3"/><path d="M-7.7 -5 h1.6 M-7.7 -1.7 h1.6 M-7.7 1.7 h1.6 M-7.7 5 h1.6" stroke="#fff" stroke-width="1.5"/><path d="M-8.4 -5 h1.7 M-8.4 -1.7 h1.7 M-8.4 1.7 h1.7 M-8.4 5 h1.7" stroke="#1f5a96" stroke-width="1.2"/><circle cx="0.9" cy="-1.9" r="2" fill="#1f5a96"/><path d="M-3.1 3.7 Q-3.1 0.3 0.9 0.3 Q4.9 0.3 4.9 3.7 Z" fill="#1f5a96"/></g><path d="M67.3 434.8 H83.1" stroke="#c9c9c9" stroke-width="1"/><g transform="translate(91.6,434.5)"><circle r="5.1" fill="none" stroke="#1f5a96" stroke-width="1.7"/><rect x="-1.45" y="-8" width="2.9" height="2.7" fill="#1f5a96" transform="rotate(22.5)"/><rect x="-1.45" y="-8" width="2.9" height="2.7" fill="#1f5a96" transform="rotate(67.5)"/><rect x="-1.45" y="-8" width="2.9" height="2.7" fill="#1f5a96" transform="rotate(112.5)"/><rect x="-1.45" y="-8" width="2.9" height="2.7" fill="#1f5a96" transform="rotate(157.5)"/><rect x="-1.45" y="-8" width="2.9" height="2.7" fill="#1f5a96" transform="rotate(202.5)"/><rect x="-1.45" y="-8" width="2.9" height="2.7" fill="#1f5a96" transform="rotate(247.5)"/><rect x="-1.45" y="-8" width="2.9" height="2.7" fill="#1f5a96" transform="rotate(292.5)"/><rect x="-1.45" y="-8" width="2.9" height="2.7" fill="#1f5a96" transform="rotate(337.5)"/></g><path d="M67.3 457.28000000000003 H83.1" stroke="#c9c9c9" stroke-width="1"/><rect x="63.5" y="453.48" width="7.6" height="7.6" rx="1.2" fill="#fdfdfd" stroke="#a9adb6" stroke-width="1"/><path d="M65.2 457.28000000000003 h4.2" stroke="#6f7480" stroke-width="1"/><g transform="translate(91.6,456.98)"><path d="M-3 -1 V-3.4 A3 3 0 0 1 3 -3.4 V-1" fill="none" stroke="#2d5d8f" stroke-width="1.2"/><rect x="-5.4" y="-1" width="10.8" height="8" rx="0.7" fill="#fff" stroke="#2d5d8f" stroke-width="1.3"/></g><path d="M92.0 479.76000000000005 H107.7" stroke="#c9c9c9" stroke-width="1"/><g transform="translate(116.2,479.46000000000004)"><path d="M-3 -1 V-3.4 A3 3 0 0 1 3 -3.4 V-1" fill="none" stroke="#2d5d8f" stroke-width="1.2"/><rect x="-5.4" y="-1" width="10.8" height="8" rx="0.7" fill="#fff" stroke="#2d5d8f" stroke-width="1.3"/></g><path d="M92.0 502.24 H107.7" stroke="#c9c9c9" stroke-width="1"/><g transform="translate(116.2,501.94)"><path d="M-3 -1 V-3.4 A3 3 0 0 1 3 -3.4 V-1" fill="none" stroke="#2d5d8f" stroke-width="1.2"/><rect x="-5.4" y="-1" width="10.8" height="8" rx="0.7" fill="#fff" stroke="#2d5d8f" stroke-width="1.3"/></g><path d="M67.3 524.7199999999999 H83.1" stroke="#c9c9c9" stroke-width="1"/><g transform="translate(91.6,524.42)"><rect x="-6.9" y="-8" width="14.6" height="16" rx="1.7" fill="#fff" stroke="#1f5a96" stroke-width="1.3"/><path d="M-7.7 -5 h1.6 M-7.7 -1.7 h1.6 M-7.7 1.7 h1.6 M-7.7 5 h1.6" stroke="#fff" stroke-width="1.5"/><path d="M-8.4 -5 h1.7 M-8.4 -1.7 h1.7 M-8.4 1.7 h1.7 M-8.4 5 h1.7" stroke="#1f5a96" stroke-width="1.2"/><circle cx="0.9" cy="-1.9" r="2" fill="#1f5a96"/><path d="M-3.1 3.7 Q-3.1 0.3 0.9 0.3 Q4.9 0.3 4.9 3.7 Z" fill="#1f5a96"/></g><path d="M67.3 547.1999999999999 H83.1" stroke="#c9c9c9" stroke-width="1"/><rect x="63.5" y="543.4" width="7.6" height="7.6" rx="1.2" fill="#fdfdfd" stroke="#a9adb6" stroke-width="1"/><path d="M65.2 547.1999999999999 h4.2" stroke="#6f7480" stroke-width="1"/><path d="M67.3 545.1 v4.2" stroke="#6f7480" stroke-width="1"/><g transform="translate(91.6,546.9)"><circle cx="-5.2" cy="-1.2" r="1.9" fill="#1f5a96"/><path d="M-9.3 3.8 Q-9 0.9 -5.2 0.9 Q-3.4 0.9 -2.6 1.9 L-3.4 3.8 Z" fill="#1f5a96"/><circle cx="5.2" cy="-1.2" r="1.9" fill="#1f5a96"/><path d="M9.3 3.8 Q9 0.9 5.2 0.9 Q3.4 0.9 2.6 1.9 L3.4 3.8 Z" fill="#1f5a96"/><circle cx="0" cy="-2" r="2.3" fill="#fff" stroke="#1f5a96" stroke-width="1.1"/><path d="M-4.4 4.6 Q-4.2 1.2 0 1.2 Q4.2 1.2 4.4 4.6 Z" fill="#fff" stroke="#1f5a96" stroke-width="1.1"/></g><path d="M67.3 569.68 H83.1" stroke="#c9c9c9" stroke-width="1"/><rect x="63.5" y="565.88" width="7.6" height="7.6" rx="1.2" fill="#fdfdfd" stroke="#a9adb6" stroke-width="1"/><path d="M65.2 569.68 h4.2" stroke="#6f7480" stroke-width="1"/><path d="M67.3 567.58 v4.2" stroke="#6f7480" stroke-width="1"/><g transform="translate(91.6,569.38)"><circle cx="3.6" cy="-1.4" r="2" fill="#1f5a96"/><path d="M0.6 4 Q1 0.8 3.6 0.8 Q7.2 0.8 7.5 4 Z" fill="#1f5a96"/><circle cx="-1.9" cy="-2.1" r="2.4" fill="#fff" stroke="#1f5a96" stroke-width="1.1"/><path d="M-6.9 4.4 Q-6.6 1.1 -1.9 1.1 Q2.3 1.1 2.8 4.4 Z" fill="#fff" stroke="#1f5a96" stroke-width="1.1"/></g><path d="M67.3 592.16 H83.1" stroke="#c9c9c9" stroke-width="1"/><g transform="translate(91.6,591.86)"><rect x="-7" y="-5.6" width="14" height="11.4" rx="1.2" fill="#fff" stroke="#2d5d8f" stroke-width="1.2"/><path d="M-6.6 -5 L0 1 L6.6 -5" fill="none" stroke="#2d5d8f" stroke-width="1.1"/></g><path d="M42.7 614.6399999999999 H58.400000000000006" stroke="#c9c9c9" stroke-width="1"/><rect x="38.900000000000006" y="610.8399999999999" width="7.6" height="7.6" rx="1.2" fill="#fdfdfd" stroke="#a9adb6" stroke-width="1"/><path d="M40.6 614.6399999999999 h4.2" stroke="#6f7480" stroke-width="1"/><g transform="translate(66.9,614.3399999999999)"><circle r="6.3" fill="#fff" stroke="#2d5d8f" stroke-width="1.3"/><ellipse rx="2.9" ry="6.3" fill="none" stroke="#2d5d8f" stroke-width="0.9"/><path d="M0 -6.3 V6.3 M-5.9 -2.2 H5.9 M-5.9 2.2 H5.9" stroke="#2d5d8f" stroke-width="0.9"/></g><path d="M67.3 637.1199999999999 H83.1" stroke="#c9c9c9" stroke-width="1"/><g transform="translate(91.6,636.8199999999999)"><circle r="6.3" fill="#fff" stroke="#2d5d8f" stroke-width="1.3"/><ellipse rx="2.9" ry="6.3" fill="none" stroke="#2d5d8f" stroke-width="0.9"/><path d="M0 -6.3 V6.3 M-5.9 -2.2 H5.9 M-5.9 2.2 H5.9" stroke="#2d5d8f" stroke-width="0.9"/></g><path d="M42.7 659.5999999999999 H58.400000000000006" stroke="#c9c9c9" stroke-width="1"/><rect x="38.900000000000006" y="655.8" width="7.6" height="7.6" rx="1.2" fill="#fdfdfd" stroke="#a9adb6" stroke-width="1"/><path d="M40.6 659.5999999999999 h4.2" stroke="#6f7480" stroke-width="1"/><g transform="translate(66.9,659.3)"><path d="M-6.1 -1.7 Q0 -6.8 6.1 -1.7" fill="none" stroke="#2d5d8f" stroke-width="1.2"/><path d="M-4 0.9 Q0 -2.6 4 0.9" fill="none" stroke="#2d5d8f" stroke-width="1.2"/><path d="M-2 3.3 Q0 1.5 2 3.3" fill="none" stroke="#2d5d8f" stroke-width="1.2"/><circle cy="5.3" r="0.85" fill="#222"/></g><path d="M67.3 682.0799999999999 H83.1" stroke="#c9c9c9" stroke-width="1"/><rect x="63.5" y="678.28" width="7.6" height="7.6" rx="1.2" fill="#fdfdfd" stroke="#a9adb6" stroke-width="1"/><path d="M65.2 682.0799999999999 h4.2" stroke="#6f7480" stroke-width="1"/><g transform="translate(91.6,681.78)"><path d="M-6.1 -1.7 Q0 -6.8 6.1 -1.7" fill="none" stroke="#2d5d8f" stroke-width="1.2"/><path d="M-4 0.9 Q0 -2.6 4 0.9" fill="none" stroke="#2d5d8f" stroke-width="1.2"/><path d="M-2 3.3 Q0 1.5 2 3.3" fill="none" stroke="#2d5d8f" stroke-width="1.2"/><circle cy="5.3" r="0.85" fill="#222"/></g><path d="M92.0 704.56 H107.7" stroke="#c9c9c9" stroke-width="1"/><g transform="translate(116.2,704.26)"><path d="M-6.1 -1.7 Q0 -6.8 6.1 -1.7" fill="none" stroke="#2d5d8f" stroke-width="1.2"/><path d="M-4 0.9 Q0 -2.6 4 0.9" fill="none" stroke="#2d5d8f" stroke-width="1.2"/><path d="M-2 3.3 Q0 1.5 2 3.3" fill="none" stroke="#2d5d8f" stroke-width="1.2"/><circle cy="5.3" r="0.85" fill="#222"/></g><path d="M67.3 727.04 H83.1" stroke="#c9c9c9" stroke-width="1"/><rect x="63.5" y="723.24" width="7.6" height="7.6" rx="1.2" fill="#fdfdfd" stroke="#a9adb6" stroke-width="1"/><path d="M65.2 727.04 h4.2" stroke="#6f7480" stroke-width="1"/><path d="M67.3 724.94 v4.2" stroke="#6f7480" stroke-width="1"/><g transform="translate(91.6,726.74)"><path d="M-6.1 -1.7 Q0 -6.8 6.1 -1.7" fill="none" stroke="#2d5d8f" stroke-width="1.2"/><path d="M-4 0.9 Q0 -2.6 4 0.9" fill="none" stroke="#2d5d8f" stroke-width="1.2"/><path d="M-2 3.3 Q0 1.5 2 3.3" fill="none" stroke="#2d5d8f" stroke-width="1.2"/><circle cy="5.3" r="0.85" fill="#222"/></g><path d="M67.3 749.5199999999999 H83.1" stroke="#c9c9c9" stroke-width="1"/><rect x="63.5" y="745.7199999999999" width="7.6" height="7.6" rx="1.2" fill="#fdfdfd" stroke="#a9adb6" stroke-width="1"/><path d="M65.2 749.5199999999999 h4.2" stroke="#6f7480" stroke-width="1"/><path d="M67.3 747.42 v4.2" stroke="#6f7480" stroke-width="1"/><g transform="translate(91.6,749.2199999999999)"><path d="M-6.1 -1.7 Q0 -6.8 6.1 -1.7" fill="none" stroke="#2d5d8f" stroke-width="1.2"/><path d="M-4 0.9 Q0 -2.6 4 0.9" fill="none" stroke="#2d5d8f" stroke-width="1.2"/><path d="M-2 3.3 Q0 1.5 2 3.3" fill="none" stroke="#2d5d8f" stroke-width="1.2"/><circle cy="5.3" r="0.85" fill="#222"/></g></svg>
<div class="t" style="left:57.3px;top:92.1px;font-size:10.22px;color:#1b1b1b">DP-4800V</div>
<div class="t" style="left:81.8px;top:114.58px;font-size:10.22px;color:#1b1b1b">Основные настройки</div>
<div class="t" style="left:106.7px;top:137.06px;font-size:10.22px;color:#1b1b1b">Общие настройки</div>
<div class="t" style="left:106.7px;top:159.54px;font-size:10.22px;color:#1b1b1b">Настройки интерфейса</div>
<div class="t" style="left:81.8px;top:182.02px;font-size:10.22px;color:#1b1b1b">Настройки клавиатуры</div>
<div class="t" style="left:81.8px;top:204.5px;font-size:10.22px;color:#1b1b1b">Настройки меню</div>
<div class="t" style="left:81.8px;top:226.98px;font-size:10.22px;color:#1b1b1b">Настройки GPS</div>
<div class="t" style="left:81.8px;top:249.46px;font-size:10.22px;color:#1b1b1b">Звукозапись</div>
<div class="t" style="left:81.8px;top:271.94px;font-size:10.22px;color:#1b1b1b">Параметры Bluetooth</div>
<div class="t" style="left:81.8px;top:294.42px;font-size:10.22px;color:#1b1b1b">Упавший человек</div>
<div class="t" style="left:81.8px;top:316.9px;font-size:10.22px;color:#1b1b1b">Экстренные вызовы</div>
<div class="t" style="left:81.8px;top:339.38px;font-size:10.22px;color:#1b1b1b">Сканирование</div>
<div class="t" style="left:106.7px;top:361.86px;font-size:10.22px;color:#1b1b1b">Настройки сканирования</div>
<div class="t" style="left:106.7px;top:384.34px;font-size:10.22px;color:#1b1b1b">Список сканирования</div>
<div class="t" style="left:81.8px;top:406.82px;font-size:10.22px;color:#1b1b1b">DMR Сервис</div>
<div class="t" style="left:106.7px;top:429.3px;font-size:10.22px;color:#1b1b1b">DMR Общие настройки</div>
<div class="t" style="left:106.7px;top:451.78px;font-size:10.22px;color:#1b1b1b">Параметры шифрования</div>
<div class="t" style="left:131.3px;top:474.26px;font-size:10.22px;color:#1b1b1b">Шифрование</div>
<div class="t" style="left:131.3px;top:496.74px;font-size:10.22px;color:#1b1b1b">Расширенное шифрование</div>
<div class="t" style="left:106.7px;top:519.22px;font-size:10.22px;color:#1b1b1b">DMR контакты</div>
<div class="t" style="left:106.7px;top:541.7px;font-size:10.22px;color:#1b1b1b">Гр. контактов</div>
<div class="t" style="left:106.7px;top:564.18px;font-size:10.22px;color:#1b1b1b">Группа приема</div>
<div class="t" style="left:106.7px;top:586.66px;font-size:10.22px;color:#1b1b1b">Короткие сообщения</div>
<div class="t" style="left:81.8px;top:609.14px;font-size:10.22px;color:#1b1b1b">Зона</div>
<div class="t" style="left:106.7px;top:631.62px;font-size:10.22px;color:#1b1b1b">Зона1</div>
<div class="t" style="left:81.8px;top:654.1px;font-size:10.22px;color:#1b1b1b">Канал</div>
<div class="t" style="left:106.7px;top:676.58px;font-size:10.22px;color:#1b1b1b">Цифр. канал</div>
<div class="t" style="left:131.3px;top:699.06px;font-size:10.22px;color:#1b1b1b">Цифровой канал1</div>
<div class="t" style="left:106.7px;top:721.54px;font-size:10.22px;color:#1b1b1b">Аналог. канал</div>
<div class="t" style="left:106.7px;top:744.02px;font-size:10.22px;color:#1b1b1b">Ц/А канал</div>
<div class="t" style="left:9.8px;top:947.5px;z-index:50;font-family:'Liberation Mono',monospace;font-weight:700;font-size:8.34px;color:#000;text-shadow:-1px 0 #fff,1px 0 #fff,0 -1px #fff,0 1px #fff,-1px -1px #fff,1px 1px #fff,1px -1px #fff,-1px 1px #fff">COPYRIGHT VIVA-TELECOM. CJSC. Viva-telecom.org. Fullfoto</div>
<div class="t" style="left:9.8px;top:957.6px;z-index:50;font-family:'Liberation Mono',monospace;font-weight:700;font-size:8.34px;color:#000;text-shadow:-1px 0 #fff,1px 0 #fff,0 -1px #fff,0 1px #fff,-1px -1px #fff,1px 1px #fff,1px -1px #fff,-1px 1px #fff">19.11.2025</div>
<div id="titlebar" class="a"></div>
<div class="a" style="left:1.5px;top:7.5px;width:14px;height:3.5px;background:#2a2a2a;border-radius:1px"></div>
<div class="a" style="left:3px;top:8.6px;width:11px;height:1.3px;background:repeating-linear-gradient(90deg,#e8e8e8 0 1.6px,#2a2a2a 1.6px 2.7px)"></div>
<div class="t" style="left:21px;top:3.5px;font-size:10.42px;color:#5b6675;letter-spacing:0.02px">DP-4000-B - [DP-4800V-1]</div>
<div class="wbtn" style="left:1714px;width:26.5px"></div>
<div class="wbtn" style="left:1742.6px;width:26.6px"></div>
<div class="wbtn" style="left:1771.4px;width:27px"></div>
<svg class="a" style="left:1714px;top:2px" width="27" height="15" viewBox="0 0 27 15"><rect x="9.5" y="8" width="8" height="3.2" rx="1.2" fill="#fff" stroke="#555f6b" stroke-width="1"/></svg>
<svg class="a" style="left:1742.6px;top:1px" width="27" height="16" viewBox="0 0 27 16"><rect x="12.8" y="3" width="6" height="6.2" rx="1" fill="#fff" stroke="#555f6b" stroke-width="1"/><rect x="9.3" y="6.2" width="6.6" height="6.4" rx="1" fill="#fff" stroke="#555f6b" stroke-width="1"/><rect x="11.3" y="8.6" width="2.6" height="2" fill="#6a7480"/></svg>
<svg class="a" style="left:1771.4px;top:2px" width="27" height="15" viewBox="0 0 27 15"><path d="M10.6 4.6 L17 10.2 M17 4.6 L10.6 10.2" stroke="#555f6b" stroke-width="3.5" stroke-linecap="round"/><path d="M10.6 4.6 L17 10.2 M17 4.6 L10.6 10.2" stroke="#fff" stroke-width="1.9" stroke-linecap="round"/></svg>
<div id="mdibar" class="a"></div>
<div class="a" style="left:4.5px;top:26.5px;width:14px;height:3px;background:#2e2e2e;border-radius:1px"></div>
<div class="a" style="left:6px;top:27.4px;width:11px;height:1.2px;background:repeating-linear-gradient(90deg,#e8e8e8 0 1.6px,#2e2e2e 1.6px 2.7px)"></div>
<div class="mbtn" style="left:1749.3px;width:16px"></div>
<div class="mbtn" style="left:1766.8px;width:15.4px"></div>
<div class="mbtn" style="left:1783.4px;width:15.3px"></div>
<svg class="a" style="left:1749.3px;top:20.5px" width="50" height="15" viewBox="0 0 50 15"><path d="M5.6 9.6 H9.6" stroke="#6b7480" stroke-width="1.1"/><path d="M24.2 5.3 H28.2 V8.3 M22.7 7.5 H26.8 V10.3 H22.7 Z" fill="none" stroke="#7b8592" stroke-width="1"/><path d="M40.6 5.6 L45 10.2 M45 5.6 L40.6 10.2" stroke="#66707d" stroke-width="1"/></svg>
<div id="menubar" class="a"></div>
<div class="t" style="left:10.9px;top:40.1px;font-size:10.1px;color:#111">Файл</div>
<div class="t" style="left:49.4px;top:40.1px;font-size:10.1px;color:#111">Программирование</div>
<div class="t" style="left:155.6px;top:40.1px;font-size:10.1px;color:#111">Операции с файлами</div>
<div class="t" style="left:272.4px;top:40.1px;font-size:10.1px;color:#111">Опции</div>
<div id="toolbar" class="a"></div>
<div id="tbshadow" class="a"></div>
<div class="a" style="left:2px;top:57.5px;width:1.5px;height:18px;background:repeating-linear-gradient(#c9c9c9 0 1.2px,transparent 1.2px 3px)"></div>
<svg class="a" style="left:11px;top:57px" width="17" height="21" viewBox="0 0 17 21"><path d="M4.6 2.3 H13.6 V18.8 H2.3 V4.6 Z" fill="none" stroke="#1d5b97" stroke-width="1.5" stroke-linejoin="round"/></svg>
<svg class="a" style="left:34px;top:59px" width="21" height="17" viewBox="0 0 21 17"><path d="M1.8 12.6 V3 H6.6 L8 5 H13.6 V7.6" fill="none" stroke="#1d5b97" stroke-width="1.4" stroke-linejoin="round"/><path d="M5.6 8.2 H18.3 L14.2 14.2 H1.9 Z" fill="none" stroke="#1d5b97" stroke-width="1.4" stroke-linejoin="round"/></svg>
<svg class="a" style="left:61px;top:59px" width="18" height="17" viewBox="0 0 18 17"><path d="M1 1 H13.6 L16.6 4 V16 H1 Z" fill="#1d5b97"/><rect x="3.6" y="2.2" width="8.6" height="4.6" fill="#fff"/><rect x="9.6" y="2.9" width="1.5" height="3.1" fill="#1d5b97"/><rect x="3" y="9.4" width="11.4" height="5.2" fill="#fff"/></svg>
<div class="a" style="left:84px;top:58px;width:1px;height:19.5px;background:#dcd3d3"></div>
<svg class="a" style="left:90.4px;top:57.5px" width="12" height="20" viewBox="0 0 12 20"><path d="M1.2 0.5 V18.8 H10.5 V4.2 Q10.5 3.3 9.4 3.3 H6.6 V4.6 H3.1 V0.5 Z" fill="none" stroke="#1d5b97" stroke-width="1.5" stroke-linejoin="round"/><rect x="0.5" y="0.3" width="2.6" height="5" fill="#1d5b97"/><rect x="3" y="7" width="6" height="1.1" fill="#1d5b97"/><rect x="3" y="9.6" width="6" height="1.3" fill="#4d6f93"/></svg>
<svg class="a" style="left:115.8px;top:57.5px" width="12" height="20" viewBox="0 0 12 20"><path d="M1.2 0.5 V18.8 H10.5 V4.2 Q10.5 3.3 9.4 3.3 H6.6 V4.6 H3.1 V0.5 Z" fill="none" stroke="#1d5b97" stroke-width="1.5" stroke-linejoin="round"/><rect x="0.5" y="0.3" width="2.6" height="5" fill="#1d5b97"/><rect x="3" y="7" width="6" height="1.1" fill="#1d5b97"/><rect x="3" y="9.6" width="6" height="1.3" fill="#4d6f93"/></svg>
<svg class="a" style="left:103px;top:61.5px" width="6" height="9" viewBox="0 0 6 9"><path d="M2.8 8 V2.2" stroke="#b5212b" stroke-width="1.3"/><path d="M0.6 3.4 L2.8 0.4 L5 3.4 Z" fill="#b5212b"/></svg>
<svg class="a" style="left:128.2px;top:69px" width="6" height="9" viewBox="0 0 6 9"><path d="M2.8 0.6 V6.4" stroke="#b5212b" stroke-width="1.3"/><path d="M0.6 5.2 L2.8 8.2 L5 5.2 Z" fill="#b5212b"/></svg>
<div id="status" class="a"></div>
<div class="t" style="left:1750.6px;top:966px;font-size:10.2px;color:#222">1.1.15.0</div>
<div class="a" style="left:175.8px;top:120.9px;width:440.2px;height:588.2px;z-index:20;border-radius:7px 7px 1px 1px;background:rgba(255,255,255,0.75)"></div>
<div class="a" style="left:176.8px;top:121.9px;width:438.2px;height:586.2px;z-index:20;border-radius:6px 6px 0 0;background:#3d4f5c"></div>
<div class="a" style="left:178.05px;top:123.1px;width:435.7px;height:583.7px;z-index:20;border-radius:5px 5px 0 0;background:linear-gradient(#c4d3e2 0,#9cb6d5 1.3px,#9fb9d8 8px,#b1cbe6 23.5px,#b9d0ea 60px,#bcd1ea 100%)"></div>
<div class="a" style="left:178.05px;top:148px;width:6px;height:553.5px;z-index:20;background:linear-gradient(90deg,#d0dcec 0,#bfd2e9 40%,#bccfe2 78%,#e4f3f7 100%)"></div>
<div class="a" style="left:607.7px;top:148px;width:6px;height:553.5px;z-index:20;background:linear-gradient(90deg,#dbe6f1 0,#bfd1e5 22%,#bcd2ec 50%,#b3dff4 85%,#7fa6b8 100%)"></div>
<div class="a" style="left:178.05px;top:701.5px;width:435.7px;height:5.3px;z-index:20;background:linear-gradient(#dbe6f1 0,#bdd0e9 25%,#b8d3ec 60%,#abd9ee 100%)"></div>
<div class="t" style="left:186.4px;top:132.6px;z-index:21;font-size:10.95px;color:#1f2c3c">Предпросмотр</div>
<div class="a" style="left:579.2px;top:130.2px;width:27.2px;height:15.2px;z-index:21;border:1px solid #6b3a3a;border-radius:2.5px;background:linear-gradient(#e7b0a6 0,#d98d80 45%,#c9452f 50%,#cf5a3e 100%);box-shadow:inset 0 0 0 0.8px rgba(255,255,255,0.45)"></div>
<svg class="a" style="left:579.2px;top:130.2px;z-index:22" width="27.2" height="15.2" viewBox="0 0 27.2 15.2"><path d="M10.2 4.2 L17.2 11 M17.2 4.2 L10.2 11" stroke="#5a3a3a" stroke-width="3.4" stroke-linecap="round"/><path d="M10.2 4.2 L17.2 11 M17.2 4.2 L10.2 11" stroke="#fff" stroke-width="2" stroke-linecap="butt"/></svg>
<div class="a" style="left:184px;top:147.6px;width:423.7px;height:553.9px;z-index:21;background:#fff;overflow:hidden"><svg class="a" style="left:0;top:0.4px" width="424" height="553" viewBox="184 148 424 553"><defs>
<linearGradient id="ant" x1="0" x2="1" y1="0" y2="0"><stop offset="0" stop-color="#2c2c2d"/><stop offset="0.22" stop-color="#3e3e3f"/><stop offset="0.5" stop-color="#4a4a4b"/><stop offset="0.8" stop-color="#353536"/><stop offset="1" stop-color="#262627"/></linearGradient>
<linearGradient id="ring" x1="0" x2="0" y1="0" y2="1"><stop offset="0" stop-color="#4a88c8"/><stop offset="0.45" stop-color="#2e64a2"/><stop offset="0.6" stop-color="#2e64a2"/><stop offset="1" stop-color="#4a86c4"/></linearGradient>
<linearGradient id="body" x1="0" x2="1" y1="0" y2="0"><stop offset="0" stop-color="#38393d"/><stop offset="0.05" stop-color="#4d4f54"/><stop offset="0.5" stop-color="#424449"/><stop offset="0.95" stop-color="#4d4f54"/><stop offset="1" stop-color="#333438"/></linearGradient>
<linearGradient id="front" x1="0" x2="0" y1="0" y2="1"><stop offset="0" stop-color="#303134"/><stop offset="0.5" stop-color="#37383b"/><stop offset="1" stop-color="#2c2d30"/></linearGradient>
<linearGradient id="kg" x1="0" x2="0" y1="0" y2="1"><stop offset="0" stop-color="#434345"/><stop offset="1" stop-color="#303032"/></linearGradient>
<linearGradient id="gloss" x1="0" x2="1" y1="0" y2="1"><stop offset="0" stop-color="#0b0b0c"/><stop offset="0.55" stop-color="#1b1b1d"/><stop offset="0.56" stop-color="#050506"/><stop offset="1" stop-color="#0a0a0b"/></linearGradient>
<linearGradient id="lcd" x1="0" x2="1" y1="0" y2="1"><stop offset="0" stop-color="#cfe1f2"/><stop offset="0.5" stop-color="#d9e8f6"/><stop offset="1" stop-color="#c6dbef"/></linearGradient>
<linearGradient id="soft" x1="0" x2="1" y1="0" y2="0"><stop offset="0" stop-color="#7fb5e3"/><stop offset="0.22" stop-color="#86b9e5"/><stop offset="0.45" stop-color="#b4d4ee"/><stop offset="0.7" stop-color="#a9cdec"/><stop offset="1" stop-color="#88bae4"/></linearGradient>
<radialGradient id="dpad" cx="0.5" cy="0.5" r="0.5"><stop offset="0" stop-color="#4a4a4c"/><stop offset="0.45" stop-color="#343436"/><stop offset="0.5" stop-color="#1d1d1e"/><stop offset="0.9" stop-color="#262627"/><stop offset="1" stop-color="#58585a"/></radialGradient>
<radialGradient id="shad" cx="0.5" cy="0.5" r="0.5"><stop offset="0" stop-color="#bdbdbd"/><stop offset="0.6" stop-color="#dedede"/><stop offset="1" stop-color="#ffffff"/></radialGradient>
<linearGradient id="bodyv" gradientUnits="userSpaceOnUse" x1="0" x2="0" y1="505" y2="575"><stop offset="0" stop-color="#000" stop-opacity="0"/><stop offset="1" stop-color="#050506" stop-opacity="0.5"/></linearGradient>
<linearGradient id="refl" x1="0" x2="0" y1="0" y2="1"><stop offset="0" stop-color="#dcdcdc"/><stop offset="0.35" stop-color="#ececec"/><stop offset="1" stop-color="#ffffff"/></linearGradient>
<linearGradient id="knob" x1="0" x2="1" y1="0" y2="0"><stop offset="0" stop-color="#151516"/><stop offset="0.5" stop-color="#2c2c2d"/><stop offset="1" stop-color="#141415"/></linearGradient>
</defs><rect x="184" y="148" width="424" height="553" fill="#fff"/><path d="M334 683 H456 V690 Q456 700 440 700.5 H350 Q334 700 334 690 Z" fill="url(#refl)"/><path d="M344.1 167 Q344.1 163 348.4 163 H362.8 Q367 163 367 167 V318 Q367.4 340 371 360 L372.4 372.3 V380 L375.6 390.5 H336.4 L339.1 380 V372.3 L340 360 Q343.6 340 344.1 318 Z" fill="url(#ant)"/><path d="M348.2 164 V345" stroke="#2a2a2b" stroke-width="0.5" opacity="0.7"/><path d="M352.4 164 V345" stroke="#2a2a2b" stroke-width="0.5" opacity="0.7"/><path d="M356.6 164 V345" stroke="#2a2a2b" stroke-width="0.5" opacity="0.7"/><path d="M360.6 164 V345" stroke="#2a2a2b" stroke-width="0.5" opacity="0.7"/><path d="M364 164 V345" stroke="#2a2a2b" stroke-width="0.5" opacity="0.7"/><rect x="339.1" y="372.3" width="33.3" height="7" fill="url(#ring)"/><path d="M413.6 392 V386.6 Q413.6 383.6 417 383.6 H451.6 Q454.4 383.6 454.4 386.6 V392 Z" fill="#585a5f"/><path d="M416.1 383.8 V365.6 Q416.1 362 420.2 362 H448 Q452 362 452 365.6 V383.8 Z" fill="url(#knob)"/><path d="M419 365 V383" stroke="#3d3d3e" stroke-width="0.8"/><path d="M422 365 V383" stroke="#3d3d3e" stroke-width="0.8"/><path d="M425 365 V383" stroke="#3d3d3e" stroke-width="0.8"/><path d="M428 365 V383" stroke="#3d3d3e" stroke-width="0.8"/><path d="M431 365 V383" stroke="#3d3d3e" stroke-width="0.8"/><path d="M434 365 V383" stroke="#3d3d3e" stroke-width="0.8"/><path d="M437 365 V383" stroke="#3d3d3e" stroke-width="0.8"/><path d="M440 365 V383" stroke="#3d3d3e" stroke-width="0.8"/><path d="M443 365 V383" stroke="#3d3d3e" stroke-width="0.8"/><path d="M446 365 V383" stroke="#3d3d3e" stroke-width="0.8"/><path d="M449 365 V383" stroke="#3d3d3e" stroke-width="0.8"/><path d="M328.3 408 Q328.3 391.2 345 391.2 H444 Q460.4 391.2 460.4 407 V409.4 L465.2 412.4 V507 Q465.2 511.6 462.2 515 Q458.2 520 458.2 526 V668 Q458.2 683.6 443 683.6 H347 Q331.8 683.6 331.8 668 V545 Q331.8 539 330.4 534 Q328.3 528 328.3 521 Z" fill="url(#body)"/><path d="M328.3 408 Q328.3 391.2 345 391.2 H444 Q460.4 391.2 460.4 407 V409.4 L465.2 412.4 V507 Q465.2 511.6 462.2 515 Q458.2 520 458.2 526 V668 Q458.2 683.6 443 683.6 H347 Q331.8 683.6 331.8 668 V545 Q331.8 539 330.4 534 Q328.3 528 328.3 521 Z" fill="url(#bodyv)"/><path d="M328.8 408 Q325.8 409 326 413 V519 Q326.2 523 328.8 524.4 Z" fill="#3a3b3f"/><path d="M326 459 H329 M326 476 H329 M326 499 H329" stroke="#4a4a4c" stroke-width="0.8"/><rect x="463.6" y="484" width="4.6" height="20.4" rx="2" fill="#2e2f33"/><path d="M460.6 410 V512" stroke="#2c2d30" stroke-width="0.9"/><path d="M374 390.4 H416 V393.6 H374 Z" fill="#1a1a1c"/><rect x="387" y="389.6" width="17" height="2.6" rx="1" fill="#d77a28"/><rect x="407.6" y="390.8" width="6" height="2.6" fill="#f4f4f4"/><path d="M337.8 411 Q337.8 396.6 352 396.6 H440 Q454 396.6 454 411 V668 Q454 679.6 442 679.6 H348 Q337.8 679.6 337.8 668 Z" fill="url(#front)"/><path d="M339.6 411 Q339.6 398.6 352 398.6 H440 Q452.2 398.6 452.2 411 V667 Q452.2 677.8 441 677.8 H350 Q339.6 677.8 339.6 667 Z" fill="none" stroke="#505155" stroke-width="0.8"/><rect x="343" y="403.4" width="105" height="128.6" rx="7" fill="url(#gloss)" stroke="#39393c" stroke-width="0.8"/><path d="M418 404 H441 Q447.4 404 447.4 410 V470 Z" fill="#232326" opacity="0.55"/><rect x="352.5" y="417.3" width="85.1" height="111.1" fill="url(#lcd)"/><rect x="352.5" y="518" width="85.1" height="10.4" fill="url(#soft)"/><path d="M356 428.3 H436" stroke="#7aa6d4" stroke-width="0.7"/><path d="M437.6 417.3 H414 L384 528.4 H437.6 Z" fill="#7fa8d4" opacity="0.10"/><g transform="translate(0,1)" fill="#3b78bb" stroke="none"><path d="M356.4 420 h4 l-2 2.6 z"/><rect x="358" y="420" width="0.8" height="6"/><rect x="360.4" y="423.6" width="0.9" height="2.4"/><rect x="362" y="421.6" width="0.9" height="4.4"/><ellipse cx="367.8" cy="424" rx="2.6" ry="1.6" fill="none" stroke="#3b78bb" stroke-width="0.9"/><path d="M372.6 421.6 v5 M375.8 421.6 v5 M372.6 424 h3.2" stroke="#3b78bb" stroke-width="0.9" fill="none"/><path d="M414.6 421.6 h5 l-2.5 3 z"/><rect x="422.4" y="421" width="2.2" height="4.6" rx="0.6"/><rect x="427.4" y="421" width="2.2" height="4.6" rx="0.6"/><rect x="433" y="420.8" width="2.8" height="5" rx="0.6"/></g><rect x="364.7" y="437.3" width="11.4" height="8.8" rx="0.8" fill="#5b90c9"/><rect x="366.4" y="439.3" width="3.2" height="3.6" fill="#cfe1f2"/><path d="M371.2 440.09999999999997 h3.4 M371.2 442.3 h3.4" stroke="#cfe1f2" stroke-width="0.8"/><rect x="392.5" y="436.09999999999997" width="9" height="7" rx="1.6" fill="#86b0dc"/><rect x="389.90000000000003" y="438.09999999999997" width="9.6" height="7.4" rx="1.8" fill="#3f7dc0"/><path d="M393.1 445.09999999999997 l0.4 2.6 l2.2 -2.4 z" fill="#3f7dc0"/><path d="M392.5 441.9 h4.4" stroke="#cfe1f2" stroke-width="0.9" stroke-dasharray="1 0.7"/><path d="M417.9 437.09999999999997 q-1.4 0.6 -1 2.6 q1 5 5.6 7 q2 0.6 2.8 -0.8 l-1.8 -2 l-1.6 0.8 q-2 -1.2 -2.6 -3.4 l1.2 -1.2 z" fill="#2e6db5"/><circle cx="422.5" cy="438.3" r="2.1" fill="#7fa9d8"/><circle cx="370.4" cy="467.5" r="5.6" fill="#86aedb"/><circle cx="370.4" cy="467.5" r="3" fill="none" stroke="#7ba5d4" stroke-width="0.8"/><circle cx="395.1" cy="467.5" r="5.8" fill="#2f6fb6"/><ellipse cx="395.1" cy="467.5" rx="2.4" ry="5.8" fill="none" stroke="#cfe1f2" stroke-width="0.8"/><path d="M389.3 467.5 h11.6 M395.1 461.7 v11.6" stroke="#cfe1f2" stroke-width="0.8"/><path d="M416.3 463.5 h4.6 q2.4 0 1 2 l-4.4 4.6 q-1.4 2 1 2 h3" fill="none" stroke="#2f6fb6" stroke-width="1.1"/><circle cx="415.3" cy="463.5" r="1.3" fill="#2f6fb6"/><path d="M422.3 470.7 l1.6 2.6 l1.6 -2.6 a1.6 1.6 0 1 0 -3.2 0" fill="#2f6fb6"/><g transform="translate(370.4,493.1)" fill="#3b7cc2"><rect x="-1.5" y="-6.2" width="3" height="3" transform="rotate(0)"/><rect x="-1.5" y="-6.2" width="3" height="3" transform="rotate(45)"/><rect x="-1.5" y="-6.2" width="3" height="3" transform="rotate(90)"/><rect x="-1.5" y="-6.2" width="3" height="3" transform="rotate(135)"/><rect x="-1.5" y="-6.2" width="3" height="3" transform="rotate(180)"/><rect x="-1.5" y="-6.2" width="3" height="3" transform="rotate(225)"/><rect x="-1.5" y="-6.2" width="3" height="3" transform="rotate(270)"/><rect x="-1.5" y="-6.2" width="3" height="3" transform="rotate(315)"/><circle r="4.5"/><circle r="1.9" fill="#d3e4f4"/></g><path d="M395.1 487.5 l5.8 2.4 l-5.8 2.4 l-5.8 -2.4 z" fill="#2f6fb6"/><path d="M389.3 492.5 l5.8 2.2 l5.8 -2.2 M389.3 494.90000000000003 l5.8 2.2 l5.8 -2.2" fill="none" stroke="#3f7dc0" stroke-width="1.2"/><text x="395" y="511.4" text-anchor="middle" font-family="Liberation Mono" font-size="5.4" fill="#6f9bc8" letter-spacing="0.3">Contacts</text><text x="356.8" y="526" font-family="Liberation Mono" font-size="6.4" fill="#5f9dd6" letter-spacing="0.2">OK</text><text x="434.6" y="526" text-anchor="end" font-family="Liberation Mono" font-size="6.4" fill="#5f9dd6" letter-spacing="0.5">Back</text><path d="M350 543.4 H373 Q377.4 543.4 375 547 Q371 552 368.6 557 Q367.4 560 364 560 H351 Q346.8 560 346.8 556 V546.6 Q346.8 543.4 350 543.4 Z" fill="url(#kg)" stroke="#0c0c0c" stroke-width="0.9"/><path d="M439.6 543.4 H416.6 Q412.2 543.4 414.6 547 Q418.6 552 421 557 Q422.2 560 425.6 560 H438.6 Q442.8 560 442.8 556 V546.6 Q442.8 543.4 439.6 543.4 Z" fill="url(#kg)" stroke="#0c0c0c" stroke-width="0.9"/><path d="M351 565.8 H365 Q367.6 565.8 368.4 569 Q369.8 575 373.6 580 Q376 583.6 371.6 583.6 H350 Q346.8 583.6 346.8 580.4 V569 Q346.8 565.8 351 565.8 Z" fill="url(#kg)" stroke="#0c0c0c" stroke-width="0.9"/><path d="M438.6 565.8 H424.6 Q422 565.8 421.2 569 Q419.8 575 416 580 Q413.6 583.6 418 583.6 H439.6 Q442.8 583.6 442.8 580.4 V569 Q442.8 565.8 438.6 565.8 Z" fill="url(#kg)" stroke="#0c0c0c" stroke-width="0.9"/><circle cx="394.9" cy="564" r="21.4" fill="#0e0e0f"/><circle cx="394.9" cy="564" r="20.2" fill="url(#dpad)"/><g fill="#f2f2f2"><rect x="356" y="549.6" width="2.3" height="2.3"/><rect x="359.2" y="549.6" width="2.3" height="2.3"/><rect x="356" y="552.8" width="2.3" height="2.3"/><rect x="359.2" y="552.8" width="2.3" height="2.3"/></g><path d="M426 552.6 l3 -2.4 v1.6 h5 v1.7 h-5 v1.6 z" fill="#f4f4f4"/><path d="M353.6 573 v5.6 h10" fill="none" stroke="#3a9a46" stroke-width="0.9"/><path d="M425 577.6 h11 M427 575 h9 l-1.6 -1.6" fill="none" stroke="#c4363a" stroke-width="0.8"/><rect x="392.6" y="548" width="4.8" height="1.7" fill="#f6f6f6"/><rect x="392.6" y="577.8" width="4.8" height="1.7" fill="#f6f6f6"/><rect x="379" y="561.6" width="1.7" height="4.8" fill="#f6f6f6"/><rect x="409.6" y="561.6" width="1.7" height="4.8" fill="#f6f6f6"/><rect x="346.4" y="589.6" width="29" height="13.6" rx="2.6" fill="url(#kg)" stroke="#0c0c0c" stroke-width="0.9"/><rect x="347.29999999999995" y="590.5" width="27.2" height="11.799999999999999" rx="2.0" fill="none" stroke="#58585a" stroke-width="0.5"/><text x="352.4" y="599.5" font-family="Liberation Sans" font-weight="700" font-size="8.2" fill="#f2f2f2">1</text><rect x="380.6" y="589.6" width="29" height="13.6" rx="2.6" fill="url(#kg)" stroke="#0c0c0c" stroke-width="0.9"/><rect x="381.5" y="590.5" width="27.2" height="11.799999999999999" rx="2.0" fill="none" stroke="#58585a" stroke-width="0.5"/><text x="386.6" y="599.5" font-family="Liberation Sans" font-weight="700" font-size="8.2" fill="#f2f2f2">2</text><text x="394.20000000000005" y="599.3000000000001" font-family="Liberation Sans" font-size="3.3" font-weight="700" fill="#6a9fce" letter-spacing="0.25">ABC</text><rect x="414.5" y="589.6" width="29" height="13.6" rx="2.6" fill="url(#kg)" stroke="#0c0c0c" stroke-width="0.9"/><rect x="415.4" y="590.5" width="27.2" height="11.799999999999999" rx="2.0" fill="none" stroke="#58585a" stroke-width="0.5"/><text x="420.5" y="599.5" font-family="Liberation Sans" font-weight="700" font-size="8.2" fill="#f2f2f2">3</text><text x="428.1" y="599.3000000000001" font-family="Liberation Sans" font-size="3.3" font-weight="700" fill="#6a9fce" letter-spacing="0.25">DEF</text><rect x="346.4" y="609.5" width="29" height="13.6" rx="2.6" fill="url(#kg)" stroke="#0c0c0c" stroke-width="0.9"/><rect x="347.29999999999995" y="610.4" width="27.2" height="11.799999999999999" rx="2.0" fill="none" stroke="#58585a" stroke-width="0.5"/><text x="352.4" y="619.4" font-family="Liberation Sans" font-weight="700" font-size="8.2" fill="#f2f2f2">4</text><text x="360.0" y="619.2" font-family="Liberation Sans" font-size="3.3" font-weight="700" fill="#6a9fce" letter-spacing="0.25">GHI</text><rect x="380.6" y="609.5" width="29" height="13.6" rx="2.6" fill="url(#kg)" stroke="#0c0c0c" stroke-width="0.9"/><rect x="381.5" y="610.4" width="27.2" height="11.799999999999999" rx="2.0" fill="none" stroke="#58585a" stroke-width="0.5"/><text x="386.6" y="619.4" font-family="Liberation Sans" font-weight="700" font-size="8.2" fill="#f2f2f2">5</text><text x="394.20000000000005" y="619.2" font-family="Liberation Sans" font-size="3.3" font-weight="700" fill="#6a9fce" letter-spacing="0.25">JKL</text><rect x="414.5" y="609.5" width="29" height="13.6" rx="2.6" fill="url(#kg)" stroke="#0c0c0c" stroke-width="0.9"/><rect x="415.4" y="610.4" width="27.2" height="11.799999999999999" rx="2.0" fill="none" stroke="#58585a" stroke-width="0.5"/><text x="420.5" y="619.4" font-family="Liberation Sans" font-weight="700" font-size="8.2" fill="#f2f2f2">6</text><text x="428.1" y="619.2" font-family="Liberation Sans" font-size="3.3" font-weight="700" fill="#6a9fce" letter-spacing="0.25">MNO</text><rect x="346.4" y="629.9" width="29" height="13.6" rx="2.6" fill="url(#kg)" stroke="#0c0c0c" stroke-width="0.9"/><rect x="347.29999999999995" y="630.8" width="27.2" height="11.799999999999999" rx="2.0" fill="none" stroke="#58585a" stroke-width="0.5"/><text x="352.4" y="639.8" font-family="Liberation Sans" font-weight="700" font-size="8.2" fill="#f2f2f2">7</text><text x="360.0" y="639.6" font-family="Liberation Sans" font-size="3.3" font-weight="700" fill="#6a9fce" letter-spacing="0.25">PQRS</text><rect x="380.6" y="629.9" width="29" height="13.6" rx="2.6" fill="url(#kg)" stroke="#0c0c0c" stroke-width="0.9"/><rect x="381.5" y="630.8" width="27.2" height="11.799999999999999" rx="2.0" fill="none" stroke="#58585a" stroke-width="0.5"/><text x="386.6" y="639.8" font-family="Liberation Sans" font-weight="700" font-size="8.2" fill="#f2f2f2">8</text><text x="394.20000000000005" y="639.6" font-family="Liberation Sans" font-size="3.3" font-weight="700" fill="#6a9fce" letter-spacing="0.25">TUV</text><rect x="414.5" y="629.9" width="29" height="13.6" rx="2.6" fill="url(#kg)" stroke="#0c0c0c" stroke-width="0.9"/><rect x="415.4" y="630.8" width="27.2" height="11.799999999999999" rx="2.0" fill="none" stroke="#58585a" stroke-width="0.5"/><text x="420.5" y="639.8" font-family="Liberation Sans" font-weight="700" font-size="8.2" fill="#f2f2f2">9</text><text x="428.1" y="639.6" font-family="Liberation Sans" font-size="3.3" font-weight="700" fill="#6a9fce" letter-spacing="0.25">WXYZ</text><rect x="346.4" y="649.9" width="29" height="13.6" rx="2.6" fill="url(#kg)" stroke="#0c0c0c" stroke-width="0.9"/><rect x="347.29999999999995" y="650.8" width="27.2" height="11.799999999999999" rx="2.0" fill="none" stroke="#58585a" stroke-width="0.5"/><text x="360.9" y="662.5" text-anchor="middle" font-family="Liberation Sans" font-weight="700" font-size="9" fill="#f0f0f0">*</text><rect x="380.6" y="649.9" width="29" height="13.6" rx="2.6" fill="url(#kg)" stroke="#0c0c0c" stroke-width="0.9"/><rect x="381.5" y="650.8" width="27.2" height="11.799999999999999" rx="2.0" fill="none" stroke="#58585a" stroke-width="0.5"/><text x="386.6" y="659.8" font-family="Liberation Sans" font-weight="700" font-size="8.2" fill="#f2f2f2">0</text><path d="M395.0 658.3 v1 h3 v-1" fill="none" stroke="#ddd" stroke-width="0.6"/><rect x="414.5" y="649.9" width="29" height="13.6" rx="2.6" fill="url(#kg)" stroke="#0c0c0c" stroke-width="0.9"/><rect x="415.4" y="650.8" width="27.2" height="11.799999999999999" rx="2.0" fill="none" stroke="#58585a" stroke-width="0.5"/><text x="429.0" y="659.5" text-anchor="middle" font-family="Liberation Sans" font-weight="700" font-size="7" fill="#f0f0f0">#</text><rect x="368" y="606.3" width="21" height="1.6" rx="0.8" fill="#0a0a0a"/><rect x="401" y="606.3" width="21" height="1.6" rx="0.8" fill="#0a0a0a"/><rect x="368" y="626.2" width="21" height="1.6" rx="0.8" fill="#0a0a0a"/><rect x="401" y="626.2" width="21" height="1.6" rx="0.8" fill="#0a0a0a"/><rect x="368" y="646.4" width="21" height="1.6" rx="0.8" fill="#0a0a0a"/><rect x="401" y="646.4" width="21" height="1.6" rx="0.8" fill="#0a0a0a"/><path d="M395.7 387.4 V346.8 H434" fill="none" stroke="#d9262c" stroke-width="1.25"/><circle cx="395.9" cy="387.5" r="3" fill="#d9262c"/><path d="M301.8 444 H324.8" fill="none" stroke="#d9262c" stroke-width="1.25"/><circle cx="324.8" cy="444" r="2.7" fill="#d9262c"/><path d="M301.8 488.9 H324" fill="none" stroke="#d9262c" stroke-width="1.25"/><circle cx="324" cy="488.9" r="2.7" fill="#d9262c"/><path d="M301.8 508.5 H324" fill="none" stroke="#d9262c" stroke-width="1.25"/><circle cx="324" cy="508.5" r="2.7" fill="#d9262c"/><path d="M301.8 548.6 H352.6" fill="none" stroke="#d9262c" stroke-width="1.25"/><circle cx="352.6" cy="548.6" r="2.7" fill="#d9262c"/><path d="M301.8 564 H379.6" fill="none" stroke="#d9262c" stroke-width="1.25"/><circle cx="377.4" cy="564" r="2.4" fill="#d9262c"/><path d="M301.8 579.2 H352.6" fill="none" stroke="#d9262c" stroke-width="1.25"/><circle cx="352.6" cy="579.2" r="2.7" fill="#d9262c"/><path d="M395 544.4 V533.3 H488.5" fill="none" stroke="#d9262c" stroke-width="1.25"/><circle cx="395" cy="544.6" r="2.2" fill="#d9262c"/><path d="M439.2 548.9 H488.5" fill="none" stroke="#d9262c" stroke-width="1.25"/><circle cx="439.2" cy="548.9" r="2.7" fill="#d9262c"/><path d="M410.7 564 H488.5" fill="none" stroke="#d9262c" stroke-width="1.25"/><circle cx="412.6" cy="564" r="2.4" fill="#d9262c"/><path d="M439.2 579.2 H488.5" fill="none" stroke="#d9262c" stroke-width="1.25"/><circle cx="439.2" cy="579.2" r="2.7" fill="#d9262c"/><path d="M395 583.6 V594.6 H488.5" fill="none" stroke="#d9262c" stroke-width="1.25"/><circle cx="395" cy="583.4" r="2.2" fill="#d9262c"/><text x="441" y="351.7" textLength="137.6" font-family="Liberation Sans" font-size="12.7" fill="#474747" stroke="#474747" stroke-width="0.14" lengthAdjust="spacingAndGlyphs">Orange button/alarm</text><text x="275.6" y="449" textLength="21.2" font-family="Liberation Sans" font-size="12.7" fill="#474747" stroke="#474747" stroke-width="0.14" lengthAdjust="spacingAndGlyphs">PTT</text><text x="215.7" y="494.6" textLength="82.8" font-family="Liberation Sans" font-size="12.7" fill="#474747" stroke="#474747" stroke-width="0.14" lengthAdjust="spacingAndGlyphs">Side button 1</text><text x="214.3" y="514.3" textLength="83.7" font-family="Liberation Sans" font-size="12.7" fill="#474747" stroke="#474747" stroke-width="0.14" lengthAdjust="spacingAndGlyphs">Side button 2</text><text x="238.7" y="553.4" textLength="58.9" font-family="Liberation Sans" font-size="12.7" fill="#474747" stroke="#474747" stroke-width="0.14" lengthAdjust="spacingAndGlyphs">OK/Menu</text><text x="273.1" y="570" textLength="24.5" font-family="Liberation Sans" font-size="12.7" fill="#474747" stroke="#474747" stroke-width="0.14" lengthAdjust="spacingAndGlyphs">Left</text><text x="285.3" y="584.3" textLength="12.3" font-family="Liberation Sans" font-size="12.7" fill="#474747" stroke="#474747" stroke-width="0.14" lengthAdjust="spacingAndGlyphs">P1</text><text x="492.7" y="537.2" textLength="17.2" font-family="Liberation Sans" font-size="12.7" fill="#474747" stroke="#474747" stroke-width="0.14" lengthAdjust="spacingAndGlyphs">Up</text><text x="492.7" y="554.7" textLength="29.4" font-family="Liberation Sans" font-size="12.7" fill="#474747" stroke="#474747" stroke-width="0.14" lengthAdjust="spacingAndGlyphs">Back</text><text x="492.7" y="568.5" textLength="33.1" font-family="Liberation Sans" font-size="12.7" fill="#474747" stroke="#474747" stroke-width="0.14" lengthAdjust="spacingAndGlyphs">Right</text><text x="492.7" y="584.4" textLength="14.1" font-family="Liberation Sans" font-size="12.7" fill="#474747" stroke="#474747" stroke-width="0.14" lengthAdjust="spacingAndGlyphs">P2</text><text x="492.7" y="599.7" textLength="36.2" font-family="Liberation Sans" font-size="12.7" fill="#474747" stroke="#474747" stroke-width="0.14" lengthAdjust="spacingAndGlyphs">Down</text></svg></div>
</div></body></html>
